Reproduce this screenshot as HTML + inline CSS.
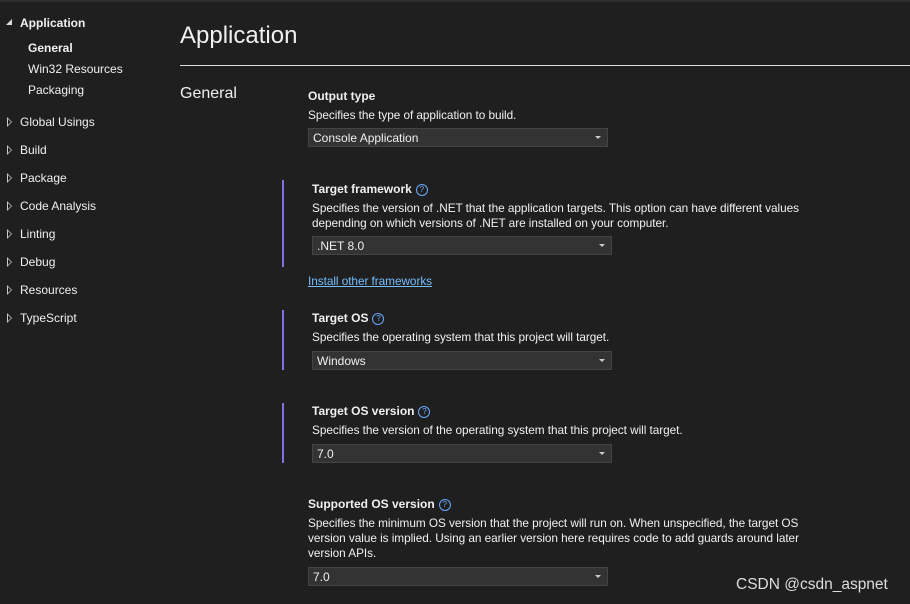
<!DOCTYPE html>
<html><head><style>
body{margin:0;width:910px;height:604px;background:#1f1f1f;color:#f0f0f0;font-family:"Liberation Sans",sans-serif;font-size:12px;position:relative;overflow:hidden}
.a{position:absolute;white-space:nowrap}
.top{position:absolute;left:0;top:0;width:910px;height:2px;background:#2d2d2d}
.nav{color:#f0f0f0;font-size:12px}
.tri{position:absolute;left:7px;width:0;height:0;border-top:5px solid transparent;border-bottom:5px solid transparent;border-left:5px solid #ccc}
.tri:after{content:"";position:absolute;left:-4px;top:-3px;border-top:3px solid transparent;border-bottom:3px solid transparent;border-left:3px solid #1f1f1f}
.b{font-weight:bold}
.d{font-size:11.8px;letter-spacing:-0.05px}
.dd{position:absolute;height:19px;background:#333;border:1px solid #444;box-sizing:border-box;padding-left:4px;line-height:18px;color:#f0f0f0}
.dd:after{content:"";position:absolute;right:6px;top:7px;border-left:3px solid transparent;border-right:3px solid transparent;border-top:3px solid #ccc}
.bar{position:absolute;left:282px;width:2px;background:#8272e0}
.q{display:inline-block;width:10px;height:10px;border:1px solid #6aa9ff;border-radius:50%;font-size:8px;line-height:10px;text-align:center;color:#6aa9ff;margin-left:4px;vertical-align:1px;font-weight:normal}
</style></head><body>
<div class="top"></div>
<div class="a" style="left:6px;top:19px;width:0;height:0;border-left:6px solid transparent;border-bottom:6px solid #ddd"></div>
<div class="a nav b" style="left:20px;top:16px">Application</div>
<div class="a nav b" style="left:28px;top:41px">General</div>
<div class="a nav" style="left:28px;top:62px">Win32 Resources</div>
<div class="a nav" style="left:28px;top:83px">Packaging</div>
<div class="tri" style="top:117px"></div><div class="a nav" style="left:20px;top:115px">Global Usings</div>
<div class="tri" style="top:145px"></div><div class="a nav" style="left:20px;top:143px">Build</div>
<div class="tri" style="top:173px"></div><div class="a nav" style="left:20px;top:171px">Package</div>
<div class="tri" style="top:201px"></div><div class="a nav" style="left:20px;top:199px">Code Analysis</div>
<div class="tri" style="top:229px"></div><div class="a nav" style="left:20px;top:227px">Linting</div>
<div class="tri" style="top:257px"></div><div class="a nav" style="left:20px;top:255px">Debug</div>
<div class="tri" style="top:285px"></div><div class="a nav" style="left:20px;top:283px">Resources</div>
<div class="tri" style="top:313px"></div><div class="a nav" style="left:20px;top:311px">TypeScript</div>

<div class="a" style="left:180px;top:22px;font-size:24px">Application</div>
<div class="a" style="left:180px;top:65px;width:730px;height:1px;background:#ddd"></div>
<div class="a" style="left:180px;top:85px;font-size:16px">General</div>

<div class="a b" style="left:308px;top:89px">Output type</div>
<div class="a d" style="left:308px;top:108px">Specifies the type of application to build.</div>
<div class="dd" style="left:308px;top:128px;width:300px">Console Application</div>

<div class="bar" style="top:180px;height:87px"></div>
<div class="a b" style="left:312px;top:182px">Target framework<span class="q">?</span></div>
<div class="a d" style="left:312px;top:201px;line-height:15px">Specifies the version of .NET that the application targets. This option can have different values<br>depending on which versions of .NET are installed on your computer.</div>
<div class="dd" style="left:312px;top:236px;width:300px">.NET 8.0</div>
<div class="a d" style="left:308px;top:274px;color:#75beff;text-decoration:underline">Install other frameworks</div>

<div class="bar" style="top:310px;height:60px"></div>
<div class="a b" style="left:312px;top:311px">Target OS<span class="q">?</span></div>
<div class="a d" style="left:312px;top:330px">Specifies the operating system that this project will target.</div>
<div class="dd" style="left:312px;top:351px;width:300px">Windows</div>

<div class="bar" style="top:403px;height:60px"></div>
<div class="a b" style="left:312px;top:404px">Target OS version<span class="q">?</span></div>
<div class="a d" style="left:312px;top:423px">Specifies the version of the operating system that this project will target.</div>
<div class="dd" style="left:312px;top:444px;width:300px">7.0</div>

<div class="a b" style="left:308px;top:497px">Supported OS version<span class="q">?</span></div>
<div class="a d" style="left:308px;top:516px;line-height:15px">Specifies the minimum OS version that the project will run on. When unspecified, the target OS<br>version value is implied. Using an earlier version here requires code to add guards around later<br>version APIs.</div>
<div class="dd" style="left:308px;top:567px;width:300px">7.0</div>

<div class="a" style="left:736px;top:576px;font-size:15.5px;color:#ddd">CSDN @csdn_aspnet</div>
</body></html>
